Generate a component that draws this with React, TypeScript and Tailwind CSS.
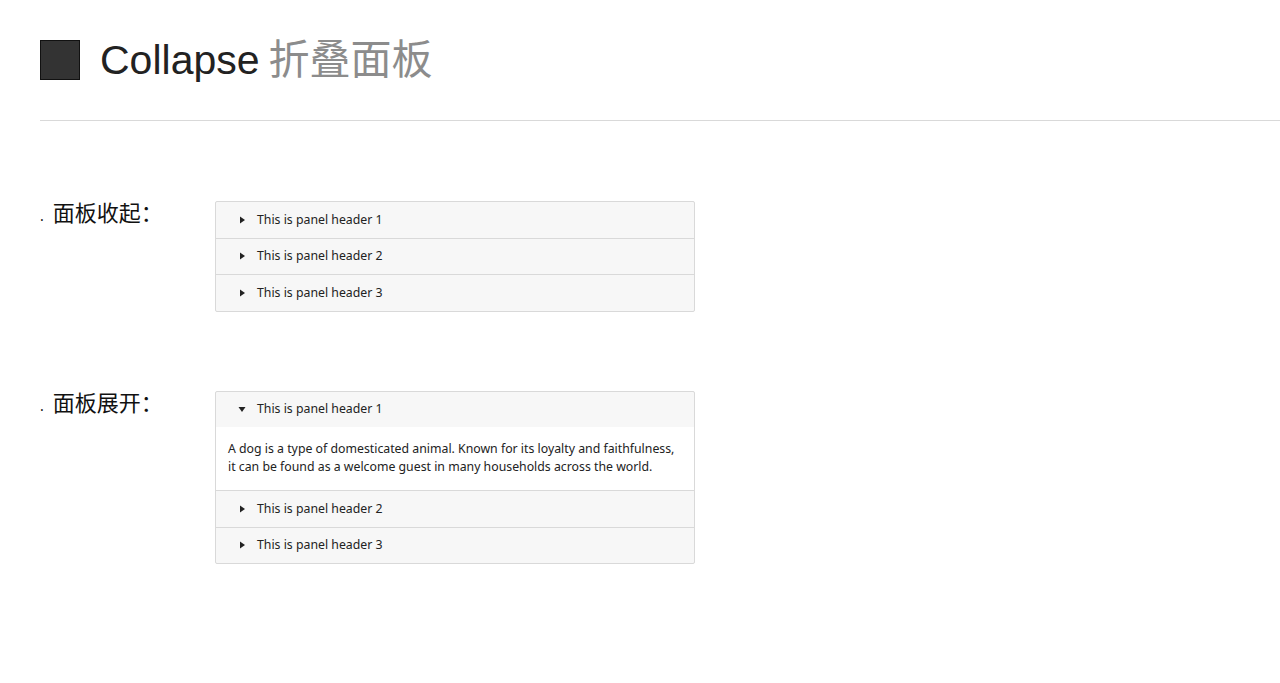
import React from 'react';

const headers = ['This is panel header 1', 'This is panel header 2', 'This is panel header 3'];

const Arrow = ({ open }: { open: boolean }) => (
  <svg width="8" height="8" viewBox="0 0 8 8" className="shrink-0">
    {open ? <path d="M0.5 2 L7.5 2 L4 7 Z" fill="#222" /> : <path d="M2 0.5 L7 4 L2 7.5 Z" fill="#222" />}
  </svg>
);

const Collapse = ({ openIndex }: { openIndex?: number }) => (
  <div className="w-[480px] rounded-[2px] border border-[#d9d9d9] bg-[#f7f7f7] text-[12.3px] text-[#222]">
    {headers.map((h, i) => (
      <div key={i} className={i > 0 ? 'border-t border-[#d9d9d9]' : ''}>
        <div className="flex h-[35.5px] items-center gap-[11px] pl-[22px]">
          <Arrow open={openIndex === i} />
          <span>{h}</span>
        </div>
        {openIndex === i && (
          <div className="bg-white px-[12px] pt-[13px] pb-[14px] leading-[18px]">
            A dog is a type of domesticated animal. Known for its loyalty and faithfulness,
            <br />
            it can be found as a welcome guest in many households across the world.
          </div>
        )}
      </div>
    ))}
  </div>
);

const Row = ({ label, openIndex }: { label: string; openIndex?: number }) => (
  <div className="flex">
    <div className="flex w-[175px] items-start">
      <span className="text-[22px] leading-[22px] text-[#111]">
        <span className="mr-[9px] text-[14px]">.</span>
        {label}
      </span>
    </div>
    <Collapse openIndex={openIndex} />
  </div>
);

export default function App() {
  return (
    <div className="min-h-[683px] bg-white pt-[40px] pl-[40px]" style={{ fontFamily: '"Noto Sans", "Noto Sans CJK SC", sans-serif' }}>
      <div className="flex items-center">
        <div className="h-[40px] w-[40px] border border-[#111] bg-[#333]" />
        <h1
          className="ml-[20px] text-[41px] leading-[40px] font-normal"
          style={{ fontFamily: '"Liberation Sans", "Noto Sans CJK SC", sans-serif' }}
        >
          <span className="text-[#222]">Collapse</span>
          <span className="ml-[9px] text-[#8c8c8c]">折叠面板</span>
        </h1>
      </div>
      <div className="mt-[40px] h-px bg-[#d9d9d9]" />
      <div className="mt-[80px] flex flex-col gap-[79px]">
        <Row label="面板收起：" />
        <Row label="面板展开：" openIndex={0} />
      </div>
    </div>
  );
}
